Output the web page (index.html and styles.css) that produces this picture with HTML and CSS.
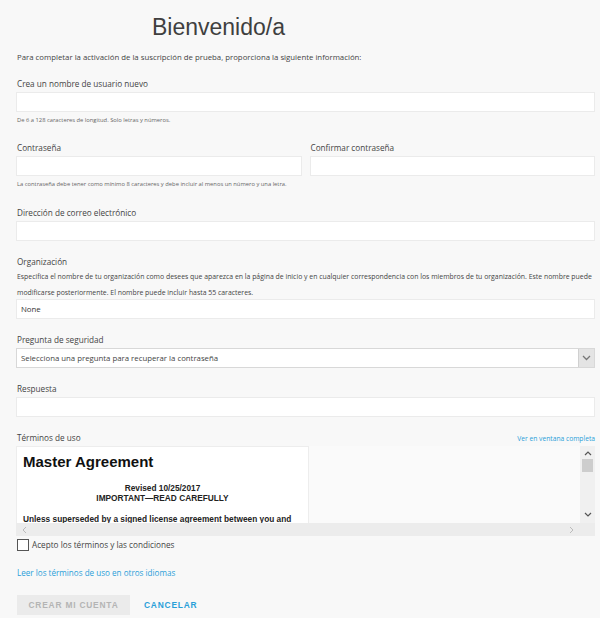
FILE: index.html
```html
<!DOCTYPE html>
<html lang="es">
<head>
  <meta charset="UTF-8" />
  <meta name="viewport" content="width=device-width, initial-scale=1.0"/>
  <title>Bienvenido/a</title>
  <link rel="stylesheet" href="styles.css">
</head>
<body>
  <div class="page">
    <h1 class="titulo">Bienvenido/a</h1>
    <p class="intro">Para completar la activación de la suscripción de prueba, proporciona la siguiente información:</p>

    <!-- Usuario -->
    <div class="campo">
      <label class="etiqueta">Crea un nombre de usuario nuevo</label>
      <div class="entrada"></div>
      <p class="ayuda">De 6 a 128 caracteres de longitud. Solo letras y números.</p>
    </div>

    <!-- Contraseñas -->
    <div class="fila">
      <div class="campo">
        <label class="etiqueta">Contraseña</label>
        <div class="entrada"></div>
      </div>
      <div class="campo">
        <label class="etiqueta">Confirmar contraseña</label>
        <div class="entrada"></div>
      </div>
    </div>
    <p class="ayuda">La contraseña debe tener como mínimo 8 caracteres y debe incluir al menos un número y una letra.</p>

    <div class="campo campo-correo">
      <label class="etiqueta">Dirección de correo electrónico</label>
      <div class="entrada"></div>
    </div>

    <div class="campo">
      <label class="etiqueta">Organización</label>
      <p class="descripcion">Especifica el nombre de tu organización como desees que aparezca en la página de inicio y en cualquier correspondencia con los miembros de tu organización. Este nombre puede<br>modificarse posteriormente. El nombre puede incluir hasta 55 caracteres.</p>
      <div class="entrada entrada-valor">None</div>
    </div>

    <div class="campo">
      <label class="etiqueta">Pregunta de seguridad</label>
      <div class="entrada selector">
        <span>Selecciona una pregunta para recuperar la contraseña</span>
        <span class="flecha">
          <svg width="9" height="6" viewBox="0 0 9 6"><path d="M1 1l3.5 3.5L8 1" fill="none" stroke="#777" stroke-width="1.3"/></svg>
        </span>
      </div>
    </div>

    <div class="campo">
      <label class="etiqueta">Respuesta</label>
      <div class="entrada"></div>
    </div>

    <!-- Términos -->
    <div class="campo">
      <div class="terminos-cabecera">
        <label class="etiqueta">Términos de uso</label>
        <a class="enlace enlace-chico" href="#">Ver en ventana completa</a>
      </div>
      <div class="terminos">
        <div class="terminos-zona">
          <div class="terminos-vista">
            <div class="documento">
              <h2>Master Agreement</h2>
              <p class="centrado">Revised 10/25/2017<br>IMPORTANT—READ CAREFULLY</p>
              <p>Unless superseded by a signed license agreement between you and</p>
            </div>
          </div>
          <div class="barra-h">
            <svg width="5" height="8" viewBox="0 0 5 8"><path d="M4 1L1 4l3 3" fill="none" stroke="#bbb" stroke-width="1"/></svg>
            <svg width="5" height="8" viewBox="0 0 5 8"><path d="M1 1l3 3-3 3" fill="none" stroke="#bbb" stroke-width="1"/></svg>
          </div>
        </div>
        <div class="barra-v">
          <svg class="caret" width="8" height="5" viewBox="0 0 8 5"><path d="M1 4l3-3 3 3" fill="none" stroke="#555" stroke-width="1.2"/></svg>
          <div class="pulgar"></div>
          <div class="hueco"></div>
          <svg class="caret" width="8" height="5" viewBox="0 0 8 5"><path d="M1 1l3 3 3-3" fill="none" stroke="#555" stroke-width="1.2"/></svg>
          <div class="esquina"></div>
        </div>
      </div>
    </div>

    <label class="acepto">
      <span class="casilla"></span>
      Acepto los términos y las condiciones
    </label>

    <a class="enlace idiomas" href="#">Leer los términos de uso en otros idiomas</a>

    <div class="acciones">
      <button class="boton boton-crear">CREAR MI CUENTA</button>
      <button class="boton boton-cancelar">CANCELAR</button>
    </div>
  </div>
</body>
</html>
```

FILE: styles.css
```css
* { box-sizing: border-box; margin: 0; padding: 0; }

body {
  font-family: 'Open Sans', 'Noto Sans', sans-serif;
  background: #f8f8f8;
  color: #444;
  height: 100vh;
  overflow: hidden;
}

.page {
  padding: 0 5px 0 16px;
}

.titulo {
  font-family: 'Liberation Sans', Arial, sans-serif;
  font-weight: normal;
  font-size: 23px;
  line-height: 26px;
  color: #3f3f3f;
  padding: 14px 0 0 136px;
}

.intro {
  font-size: 7.8px;
  line-height: 12px;
  margin-top: 11px;
  padding-left: 1px;
}

.campo {
  margin-top: 15px;
  display: flex;
  flex-direction: column;
}

.campo-correo { margin-top: 18px; }

.etiqueta {
  font-size: 8.2px;
  line-height: 12px;
  padding-left: 1px;
  margin-bottom: 2px;
}

.entrada {
  height: 20px;
  background: #fff;
  border: 1px solid #ebebeb;
  font-size: 7.8px;
  line-height: 18px;
  padding-left: 4px;
}

.entrada-valor {
  color: #333;
  margin-top: -1px;
}

.ayuda {
  font-size: 5.8px;
  line-height: 10px;
  margin-top: 3px;
  padding-left: 1px;
  color: #666;
}

.fila {
  display: grid;
  grid-template-columns: 1fr 1fr;
  gap: 8px;
  margin-top: 2px;
}

.descripcion {
  font-size: 6.9px;
  line-height: 15.5px;
  padding-left: 1px;
  margin-top: -1px;
  white-space: nowrap;
}

.selector {
  display: flex;
  justify-content: space-between;
  align-items: center;
  padding-right: 0;
  border-color: #d8d8d8;
}

.flecha {
  width: 16px;
  height: 18px;
  background: #e4e4e4;
  border-left: 1px solid #d0d0d0;
  display: flex;
  align-items: center;
  justify-content: center;
}

.terminos-cabecera {
  display: flex;
  justify-content: space-between;
  align-items: baseline;
}

.enlace {
  color: #2a9fd8;
  text-decoration: none;
}

.enlace-chico {
  font-size: 6.7px;
}

.terminos {
  display: flex;
  height: 90px;
  background: #fafafa;
}

.terminos-zona {
  flex: 1;
  display: flex;
  flex-direction: column;
}

.terminos-vista {
  flex: 1;
  overflow: hidden;
}

.documento {
  width: 293px;
  height: 100%;
  background: #fff;
  border: 1px solid #ededed;
  border-bottom: none;
  font-family: 'Liberation Sans', Arial, sans-serif;
  font-weight: bold;
  color: #111;
  padding: 6px 6px 0 6px;
}

.documento h2 {
  font-size: 15px;
  line-height: 18px;
}

.documento p {
  font-size: 8.3px;
  line-height: 10px;
  color: #222;
}

.documento .centrado {
  text-align: center;
  margin-top: 12px;
  margin-bottom: 11px;
}

.barra-h {
  height: 13px;
  background: #ececec;
  display: flex;
  justify-content: space-between;
  align-items: center;
  padding: 0 6px 0 6px;
}

.barra-v {
  width: 15px;
  background: #f0f0f0;
  display: flex;
  flex-direction: column;
  align-items: center;
}

.caret { margin: 5px 0 2px; }

.pulgar {
  width: 11px;
  height: 13px;
  background: #cdcdcd;
  margin-top: 1px;
}

.hueco { flex: 1; }

.esquina {
  width: 15px;
  height: 13px;
  background: #ececec;
  margin-top: 4px;
}

.acepto {
  display: flex;
  align-items: center;
  gap: 3px;
  font-size: 8.2px;
  line-height: 14px;
  margin-top: 2px;
  padding-left: 1px;
}

.casilla {
  width: 12px;
  height: 12px;
  border: 1px solid #555;
  background: #fff;
}

.idiomas {
  display: block;
  font-size: 8.1px;
  line-height: 12px;
  margin-top: 15px;
  padding-left: 1px;
}

.acciones {
  display: flex;
  align-items: center;
  gap: 14px;
  margin-top: 16px;
  padding-left: 1px;
}

.boton {
  font-family: 'Liberation Sans', Arial, sans-serif;
  font-weight: bold;
  font-size: 8.4px;
  letter-spacing: 0.8px;
  border: none;
  height: 20px;
  background: none;
}

.boton-crear {
  background: #ebebeb;
  color: #b4b4b4;
  width: 113px;
}

.boton-cancelar {
  color: #2a9fd8;
  padding: 0;
}
```
